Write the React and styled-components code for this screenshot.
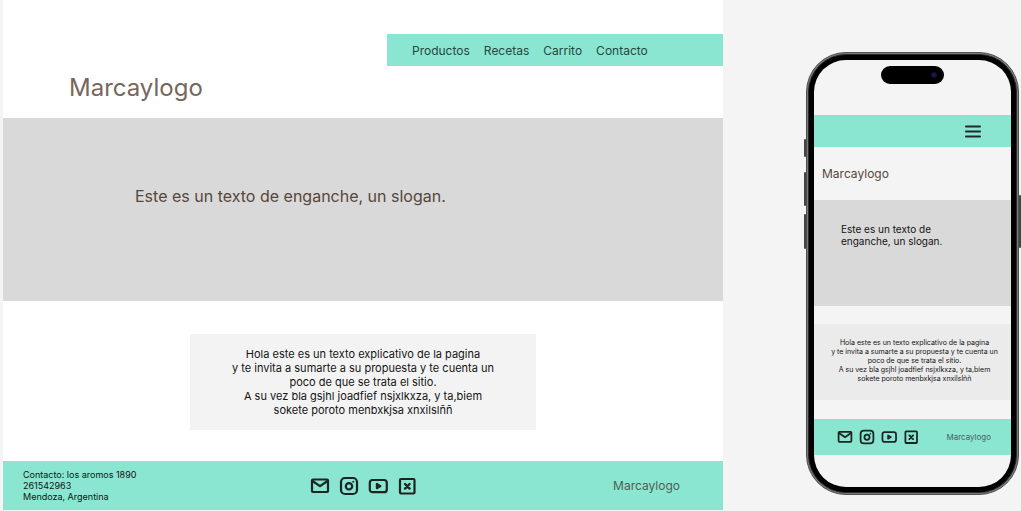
import React from "react";
import styled, { createGlobalStyle } from "styled-components";

const mint = "#8ae6d0";
const grey = "#d9d9d9";
const canvas = "#f4f4f4";

const GlobalStyle = createGlobalStyle`
  *, *::before, *::after { box-sizing: border-box; }
  body {
    margin: 0;
    background: ${canvas};
    color: #141414;
    font-family: Inter, "Liberation Sans", sans-serif;
  }
  h1, h2, p, ul { margin: 0; padding: 0; font-weight: 400; }
  ul { list-style: none; }
  a { color: inherit; text-decoration: none; }
`;

const Board = styled.main`
  display: flex;
  align-items: flex-start;
  gap: 83px;
  padding: 0 2px 1px 3px;
`;

const Desktop = styled.section`
  flex: 1;
  min-width: 0;
  background: #fff;
`;

const Header = styled.header`
  display: flex;
  flex-direction: column;
  padding-top: 34px;
`;

const Nav = styled.nav`
  align-self: flex-end;
  width: 336px;
  padding: 9px 25px 7px;
  background: ${mint};
  color: #27463f;
  font-size: 12px;
  line-height: 16px;

  ul { display: flex; gap: 14px; }
`;

const Brand = styled.h1`
  padding: 6px 66px 14px;
  color: #75675b;
  font-size: 24px;
  line-height: 32px;
`;

const Hero = styled.section`
  min-height: 183px;
  padding: 68px 132px;
  background: ${grey};
  color: #56473b;
  font-size: 16px;
  line-height: 20px;
`;

const Intro = styled.section`
  display: flex;
  justify-content: center;
  padding: 33px 0 31px;
`;

const Card = styled.p`
  width: 48%;
  min-width: 300px;
  padding: 13px 16px;
  background: #f3f3f3;
  font-size: 11px;
  line-height: 14px;
  text-align: center;
  white-space: pre-line;
`;

const Footer = styled.footer`
  display: grid;
  grid-template-columns: 1fr auto 1fr;
  align-items: center;
  padding: 8px 20px;
  background: ${mint};
`;

const Address = styled.p`
  font-size: 9px;
  line-height: 11px;
  white-space: pre-line;
`;

const Social = styled.ul`
  display: flex;
  gap: ${(p) => (p.$small ? 6 : 9)}px;

  a, svg { display: block; }
  svg {
    width: ${(p) => (p.$small ? 16 : 20)}px;
    height: ${(p) => (p.$small ? 16 : 20)}px;
  }
`;

const FooterBrand = styled.p`
  justify-self: end;
  padding-right: ${(p) => (p.$small ? 0 : 23)}px;
  color: #4c6156;
  font-size: ${(p) => (p.$small ? 8 : 12)}px;
  line-height: 16px;
`;

const Phone = styled.section`
  position: relative;
  flex: none;
  width: 213px;
  margin-top: 52px;
  padding: 1px;
  border: 1px solid #505050;
  border-radius: 40px;
  background: #7a7a7a;
`;

const SideKey = styled.span`
  position: absolute;
  top: ${(p) => p.$top}px;
  ${(p) => (p.$right ? "right: -3px" : "left: -3px")};
  width: 2px;
  height: ${(p) => p.$length}px;
  border-radius: 1px;
  background: #444;
`;

const Bezel = styled.div`
  padding: 5px;
  border: 1px solid #2a2a2a;
  border-radius: 38px;
  background: #000;
`;

const Screen = styled.div`
  min-height: 427px;
  overflow: hidden;
  border-radius: 32px;
  background: ${canvas};
`;

const StatusArea = styled.div`
  display: flex;
  justify-content: center;
  height: 55px;
  padding-top: 6px;
`;

const Island = styled.div`
  display: flex;
  align-items: center;
  justify-content: flex-end;
  width: 63px;
  height: 18px;
  padding-right: 7px;
  border-radius: 9px;
  background: #000;
`;

const Lens = styled.span`
  width: 6px;
  height: 6px;
  border-radius: 50%;
  background: radial-gradient(#1e1e5c, #08081a);
`;

const PhoneBar = styled.div`
  display: flex;
  justify-content: flex-end;
  padding: 6px 28px;
  background: ${mint};
`;

const MenuButton = styled.button`
  width: 20px;
  height: 20px;
  padding: 0;
  border: 0;
  background: none;

  svg { display: block; }
`;

const PhoneBrand = styled.h2`
  padding: 19px 8px 18px;
  color: #56473b;
  font-size: 12px;
  line-height: 16px;
`;

const PhoneHero = styled.p`
  min-height: 106px;
  padding: 23px 27px;
  background: ${grey};
  font-size: 10px;
  line-height: 12px;
  white-space: pre-line;
`;

const PhoneCard = styled.p`
  margin: 18px 0 19px;
  padding: 14px 0 17px 4px;
  background: #ebebeb;
  font-size: 7px;
  line-height: 9px;
  text-align: center;
  white-space: pre-line;
`;

const PhoneFooter = styled.footer`
  display: flex;
  align-items: center;
  justify-content: space-between;
  padding: 10px 20px 10px 23px;
  background: ${mint};
`;

const Icon = ({ children }) => (
  <svg viewBox="0 0 20 20" fill="none" stroke="#1c2523" strokeWidth="2.2" strokeLinejoin="round" strokeLinecap="round" aria-hidden="true">
    {children}
  </svg>
);

const socialLinks = [
  { label: "Correo", art: <><rect x="2" y="3.5" width="16" height="12.5" rx="1" /><path d="M2.500 5 10 10.200 17.500 5" /></> },
  { label: "Instagram", art: <><rect x="2" y="2" width="16" height="16" rx="4" /><circle cx="10" cy="10.3" r="3.2" /><circle cx="14.300" cy="5.700" r=".4" strokeWidth="1.3" /></> },
  { label: "YouTube", art: <><rect x="1.800" y="4" width="17" height="12.200" rx="2.800" /><path d="M8.800 7.900v4.400l3.700-2.200z" strokeWidth="2" /></> },
  { label: "X", art: <><rect x="3" y="3" width="14.500" height="14.500" rx="1" /><path d="m8 8 4.600 4.600m0-4.600L8 12.600" strokeWidth="2.400" /></> },
];

const SocialIcons = ({ small }) => (
  <Social $small={small}>
    {socialLinks.map(({ label, art }) => (
      <li key={label}>
        <a href="#" aria-label={label}><Icon>{art}</Icon></a>
      </li>
    ))}
  </Social>
);

const intro = `Hola este es un texto explicativo de la pagina
y te invita a sumarte a su propuesta y te cuenta un
poco de que se trata el sitio.
A su vez bla gsjhl joadfief nsjxlkxza, y ta,biem
sokete poroto menbxkjsa xnxilslññ`;

export default function App() {
  return (
    <>
      <GlobalStyle />
      <Board>
        <Desktop>
          <Header>
            <Nav>
              <ul>
                {["Productos", "Recetas", "Carrito", "Contacto"].map((name) => (
                  <li key={name}><a href="#">{name}</a></li>
                ))}
              </ul>
            </Nav>
            <Brand>Marcaylogo</Brand>
          </Header>
          <Hero><p>Este es un texto de enganche, un slogan.</p></Hero>
          <Intro><Card>{intro}</Card></Intro>
          <Footer>
            <Address>{"Contacto: los aromos 1890\n261542963\nMendoza, Argentina"}</Address>
            <SocialIcons />
            <FooterBrand>Marcaylogo</FooterBrand>
          </Footer>
        </Desktop>

        <Phone>
          <SideKey $top={86} $length={18} />
          <SideKey $top={119} $length={34} />
          <SideKey $top={161} $length={35} />
          <SideKey $top={142} $length={53} $right />
          <Bezel>
            <Screen>
              <StatusArea><Island><Lens /></Island></StatusArea>
              <PhoneBar>
                <MenuButton type="button" aria-label="Menú">
                  <svg width="20" height="20" stroke="#1f2b29" strokeWidth="2" strokeLinecap="round">
                    <path d="M3 5.500h14M3 10.500h14M3 15.500h14" />
                  </svg>
                </MenuButton>
              </PhoneBar>
              <PhoneBrand>Marcaylogo</PhoneBrand>
              <PhoneHero>{"Este es un texto de\nenganche, un slogan."}</PhoneHero>
              <PhoneCard>{intro}</PhoneCard>
              <PhoneFooter>
                <SocialIcons small />
                <FooterBrand $small>Marcaylogo</FooterBrand>
              </PhoneFooter>
            </Screen>
          </Bezel>
        </Phone>
      </Board>
    </>
  );
}
